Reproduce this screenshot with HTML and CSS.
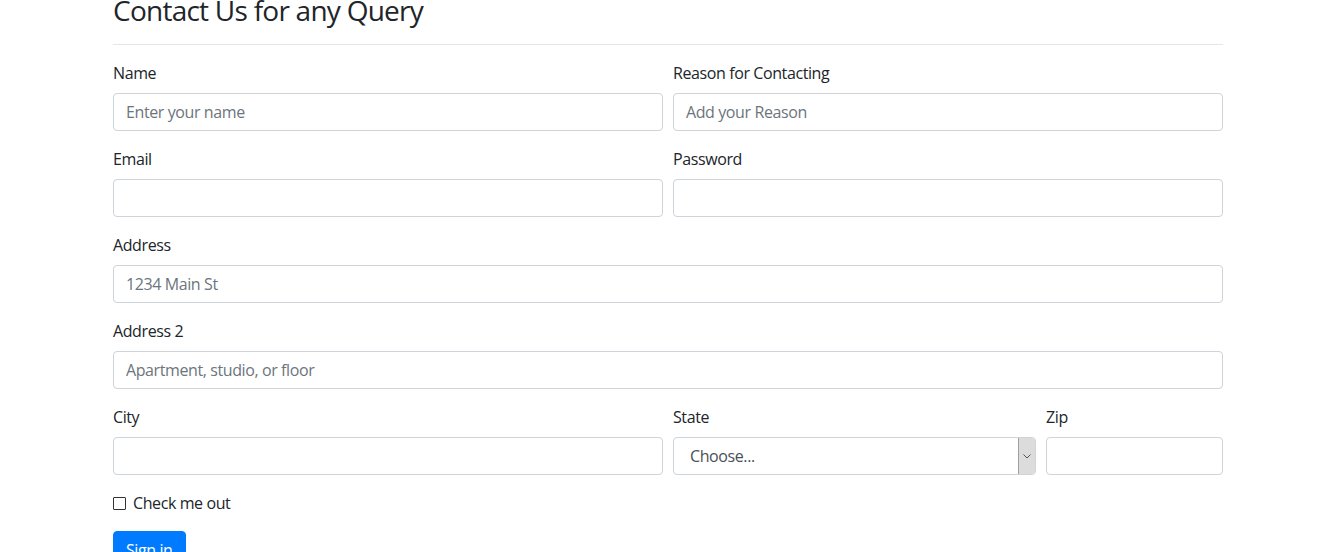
FILE: index.html
```html
<!DOCTYPE html>
<html>
<head>
<meta charset="utf-8">
<link rel="stylesheet" href="styles.css">
</head>
<body>
<div class="container">
  <h3 class="title">Contact Us for any Query</h3>
  <hr class="rule">
  <form class="form">
    <div class="row">
      <div class="group col-6">
        <label class="label">Name</label>
        <input class="control" type="text" placeholder="Enter your name">
      </div>
      <div class="group col-6">
        <label class="label">Reason for Contacting</label>
        <input class="control" type="text" placeholder="Add your Reason">
      </div>
    </div>
    <div class="row">
      <div class="group col-6">
        <label class="label">Email</label>
        <input class="control" type="email">
      </div>
      <div class="group col-6">
        <label class="label">Password</label>
        <input class="control" type="password">
      </div>
    </div>
    <div class="group">
      <label class="label">Address</label>
      <input class="control" type="text" placeholder="1234 Main St">
    </div>
    <div class="group">
      <label class="label">Address 2</label>
      <input class="control" type="text" placeholder="Apartment, studio, or floor">
    </div>
    <div class="row">
      <div class="group col-6">
        <label class="label">City</label>
        <input class="control" type="text">
      </div>
      <div class="group col-4">
        <label class="label">State</label>
        <div class="select-wrap">
          <select class="control select">
            <option>Choose...</option>
            <option>...</option>
          </select>
          <span class="select-arrow">
            <svg width="8" height="5" viewBox="0 0 8 5"><path d="M0.5 0.5 L4 4 L7.5 0.5" fill="none" stroke="#555" stroke-width="1"/></svg>
          </span>
        </div>
      </div>
      <div class="group col-2">
        <label class="label">Zip</label>
        <input class="control" type="text">
      </div>
    </div>
    <div class="check">
      <input class="check-box" type="checkbox" id="gridCheck">
      <label class="check-label" for="gridCheck">Check me out</label>
    </div>
    <button type="submit" class="btn">Sign in</button>
  </form>
</div>
</body>
</html>
```
FILE: styles.css
```css
html, body {
  margin: 0;
  padding: 0;
  background: #fff;
}
body {
  font-family: "Open Sans", "Noto Sans", sans-serif;
  font-size: 16px;
  line-height: 1.5;
  color: #212529;
  letter-spacing: -0.4px;
  overflow: hidden;
}
.container {
  width: 1110px;
  margin-left: 113px;
}
.title {
  font-size: 28px;
  font-weight: 400;
  line-height: 34px;
  letter-spacing: -0.75px;
  margin: -7px 0 0 0;
}
.rule {
  border: 0;
  border-top: 1px solid rgba(0,0,0,0.1);
  margin: 17px 0 16px 0;
  height: 0;
}
.form {
  margin: 0;
}
.row {
  display: flex;
  gap: 10px;
}
.group {
  margin-bottom: 16px;
  display: flex;
  flex-direction: column;
}
.col-6 { width: 550px; }
.col-4 { width: 363px; }
.col-2 { width: 177px; }
.label {
  display: block;
  margin-bottom: 8px;
  line-height: 24px;
}
.control {
  box-sizing: border-box;
  width: 100%;
  height: 38px;
  padding: 6px 12px;
  font-family: inherit;
  font-size: 16px;
  letter-spacing: -0.4px;
  line-height: 24px;
  color: #495057;
  background: #fff;
  border: 1px solid #ced4da;
  border-radius: 4px;
  outline: none;
  margin: 0;
}
.control::placeholder {
  color: #6c757d;
  opacity: 1;
}
.select-wrap {
  position: relative;
}
.select {
  appearance: none;
  -webkit-appearance: none;
  padding-left: 16px;
}
.select-arrow {
  position: absolute;
  top: 1px;
  right: 1px;
  width: 16px;
  height: 36px;
  background: #dcdcdc;
  border-left: 1px solid #a0a0a0;
  border-radius: 0 3px 3px 0;
  display: flex;
  align-items: center;
  justify-content: center;
}
.check {
  display: flex;
  align-items: center;
  margin-bottom: 16px;
  height: 24px;
}
.check-box {
  appearance: none;
  -webkit-appearance: none;
  width: 13px;
  height: 13px;
  margin: 0 7px 0 0;
  border: 1px solid #333;
  border-radius: 1px;
  background: #fff;
  box-sizing: border-box;
}
.check-label {
  line-height: 24px;
}
.btn {
  font-family: inherit;
  font-size: 16px;
  letter-spacing: -0.4px;
  line-height: 24px;
  color: #fff;
  background: #007bff;
  border: 1px solid #007bff;
  border-radius: 4px;
  padding: 6px 12px;
  cursor: pointer;
}
```
